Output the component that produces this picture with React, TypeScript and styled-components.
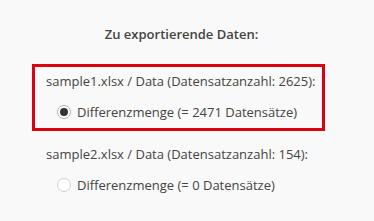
import React, { useState } from "react";
import styled, { createGlobalStyle } from "styled-components";

const GlobalStyle = createGlobalStyle`
  html, body {
    margin: 0;
    padding: 0;
    background: #f9f9f9;
  }
  body {
    font-family: "Open Sans", "Noto Sans", sans-serif;
    color: #444;
  }
`;

const Page = styled.div`
  width: 374px;
  height: 221px;
  padding-top: 24px;
  box-sizing: border-box;
  display: flex;
  flex-direction: column;
`;

const Title = styled.div`
  font-size: 13px;
  font-weight: 600;
  color: #444;
  text-align: center;
  padding-right: 11px;
  line-height: 20px;
`;

const Sources = styled.div`
  margin-top: 20px;
  margin-left: 32px;
  width: 293px;
  display: flex;
  flex-direction: column;
`;

const Source = styled.div<{ $highlight?: boolean }>`
  box-sizing: border-box;
  border: 3px solid ${(p) => (p.$highlight ? "#dd0011" : "transparent")};
  padding: 4px 0 6px 11px;
  margin-bottom: 6px;
`;

const SourceLabel = styled.div`
  font-size: 13px;
  line-height: 20px;
  color: #444;
  white-space: nowrap;
`;

const Option = styled.label`
  display: flex;
  align-items: center;
  gap: 6px;
  margin-top: 11px;
  margin-left: 11px;
  font-size: 13px;
  line-height: 20px;
  color: #444;
  cursor: pointer;
  white-space: nowrap;
`;

const Radio = styled.span<{ $checked?: boolean }>`
  box-sizing: border-box;
  width: 14px;
  height: 14px;
  border-radius: 50%;
  border: 1px solid ${(p) => (p.$checked ? "#b0b0b0" : "#d0d0d0")};
  background: #fff;
  display: flex;
  align-items: center;
  justify-content: center;
  &::after {
    content: "";
    width: 8px;
    height: 8px;
    border-radius: 50%;
    background: ${(p) => (p.$checked ? "#333" : "transparent")};
  }
`;

interface DataSource {
  name: string;
  count: number;
  diff: number;
}

const sources: DataSource[] = [
  { name: "sample1.xlsx / Data", count: 2625, diff: 2471 },
  { name: "sample2.xlsx / Data", count: 154, diff: 0 },
];

const App: React.FC = () => {
  const [selected, setSelected] = useState<number>(0);

  return (
    <>
      <GlobalStyle />
      <Page>
        <Title>Zu exportierende Daten:</Title>
        <Sources>
          {sources.map((s, i) => (
            <Source key={s.name} $highlight={i === 0}>
              <SourceLabel>
                {s.name} (Datensatzanzahl: {s.count}):
              </SourceLabel>
              <Option onClick={() => setSelected(i)}>
                <Radio $checked={selected === i} />
                Differenzmenge (= {s.diff} Datensätze)
              </Option>
            </Source>
          ))}
        </Sources>
      </Page>
    </>
  );
};

export default App;
